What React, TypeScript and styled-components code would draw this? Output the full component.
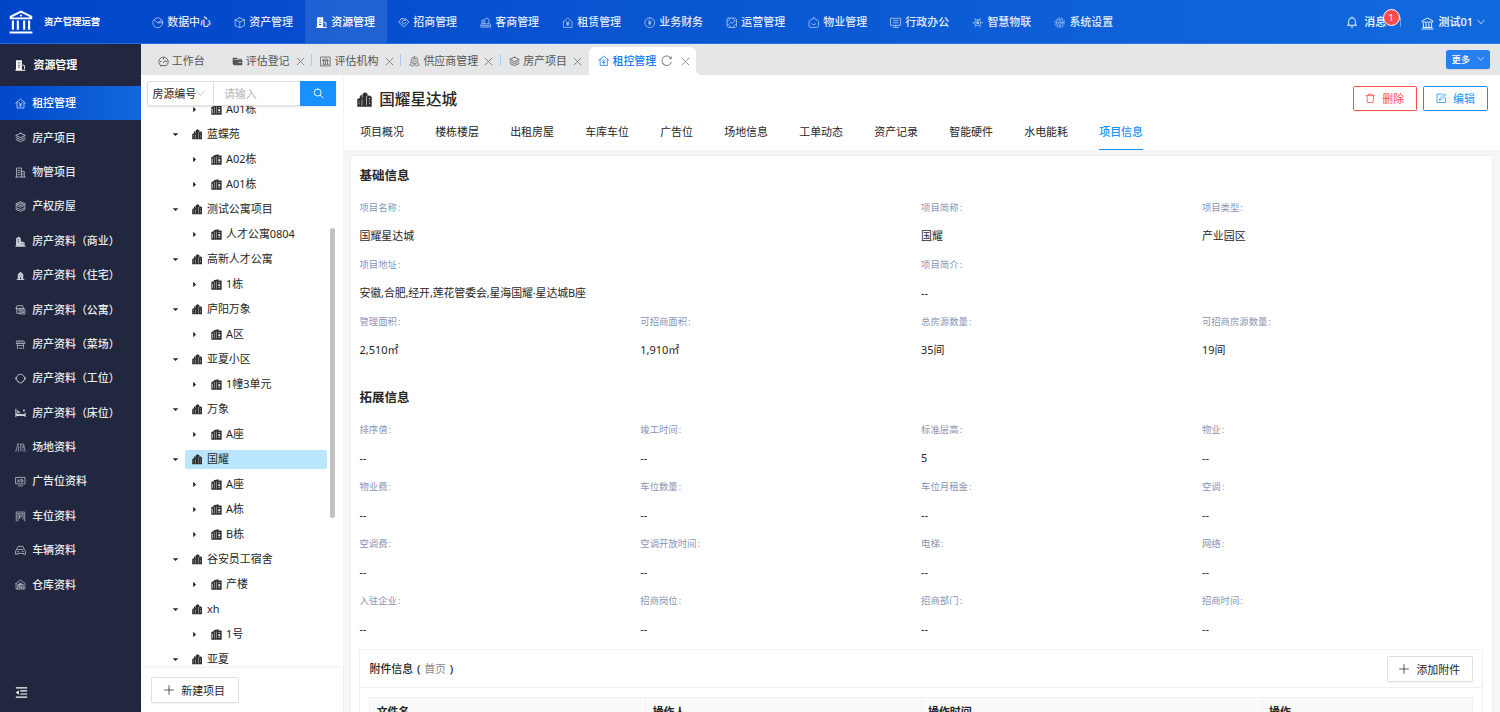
import React from "react";
import styled, { createGlobalStyle, css } from "styled-components";

const GlobalStyle = createGlobalStyle`
  *, *::before, *::after { box-sizing: border-box; }
  html, body { margin: 0; height: 100%; overflow: hidden; }
  body {
    font-family: "Noto Sans", "Noto Sans CJK SC", sans-serif;
    font-size: 10.94px;
    line-height: 1.5;
    color: #262626;
    background: #fff;
  }
  #root { height: 100%; }
`;

/* ---------- icons, drawn on a 16 x 16 grid ---------- */

const S = { fill: "none", stroke: "currentColor", strokeLinecap: "round", strokeLinejoin: "round" } as const;
const F = { fill: "currentColor", fillRule: "evenodd" } as const;

const icons: Record<string, React.ReactNode> = {
  logo: (
    <g>
      <path {...F} d="M8 .4 15.5 4v2.2H.5V4L8 .4Zm0 1.4L2.2 4.6v.4h11.6v-.4L8 1.8Z" />
      <circle {...F} cx="8" cy="3.7" r=".7" />
      <path {...F} d="M1.9 7h1.4v6.2H1.9zM5.2 7h1.4v6.2H5.2zM9.4 7h1.4v6.2H9.4zM12.7 7h1.4v6.2h-1.4zM.4 14.3h15.2v1.3H.4z" />
    </g>
  ),
  bank: <path {...S} strokeWidth="1.1" d="M1.5 5.8v-1L8 1.2l6.5 3.6v1zM3 8v5M6.3 8v5M9.7 8v5M13 8v5M1.2 14.8h13.6M2.5 12.9h11" />,
  pie: <path {...S} strokeWidth="1.1" d="M14.8 8A6.8 6.8 0 1 1 8 1.2c3.8 0 6.8 3 6.8 6.8ZM3.2 3.6 8 8l5.6-3.4M8 8h6.6" />,
  cube: <path {...S} strokeWidth="1.1" d="M8 1 14.5 4v8L8 15 1.5 12V4L8 1ZM1.5 4 8 7l6.5-3M8 7v8" />,
  office: <path {...F} d="M1.500.5h8.500v13.500h5v1.500H.5V14h1V.5Zm2.500 3.200v1.100h3.500V3.700H4Zm0 3.100v1.100h3.500V6.800H4Zm0 3.100v1.100h3.500V9.900H4ZM11 6l3.500 2.500V13h-1.200V9.200L11 7.600V6Z" />,
  officeLine: <path {...S} strokeWidth="1.1" d="M2.2 14.5V1.5h7.3v13M9.5 6.5h4v8M1 14.5h14M4.4 5h3M4.4 8h3M4.4 11h3M11.6 9.5v2" />,
  tag: <path {...S} strokeWidth="1.2" d="M4.500 2.500h6.500L15 7 8 14 1 7 4.500 2.500ZM5 7.200 8 10.200l3-3M8 4.500 5.500 7M8 4.500h2.500" />,
  stamp: <path {...S} strokeWidth="1.1" d="M6 9.200c.8-.8.8-1.600.5-2.700C5.900 4 6.900 1.500 9.300 1.500S12.800 4 12.200 6.500c-.3 1.100-.3 1.900.5 2.700M3 9.500h10c1 0 1.800.8 1.800 1.800V14H1.200v-2.700c0-1 .8-1.800 1.800-1.800ZM2.500 4.500h2.500M2 7h3M3.500 12h9" />,
  houseYen: <path {...S} strokeWidth="1" d="M2 6.500 8 1.300l6 5.200v8H2v-8ZM6 6l2 2.500L10 6M8 8.500V12M6.300 9h3.400M6.300 10.700h3.400" />,
  homeYen: <path {...S} strokeWidth="1.1" d="M1 7.500 8 1.500l7 6M3 6v8.500h10V6M6 6.800l2 2.400 2-2.400M8 9.200V12.500M6.300 10.200h3.400" />,
  yen: <path {...S} strokeWidth="1.1" d="M8 1.200a6.800 6.800 0 1 1 0 13.600A6.800 6.800 0 0 1 8 1.200ZM6.300 5 8 7.200 9.700 5M8 7.200v4M6.500 7.800h3M6.500 9.300h3" />,
  ops: <path {...S} strokeWidth="1" d="M3 1.500h10l1.500 1.500v10L13 14.500H3L1.500 13V3L3 1.500ZM1.500 6c3-.5 4-2 4.500-4.500M14.500 6c-3-.5-4-2-4.500-4.500M1.500 10c3 .5 4 2 4.500 4.500M14.500 10c-3 .5-4 2-4.500 4.500M5 9.500l2-2.500 2 2 2-3" />,
  houseSmile: <path {...S} strokeWidth="1.1" d="M8 1.300 13.600 5c.6.4.9 1 .9 1.700v5.500c0 1.300-1 2.300-2.300 2.300H3.800c-1.300 0-2.300-1-2.300-2.300V6.700c0-.7.3-1.300.9-1.700L8 1.300ZM5.300 9.500c1.500 1.600 3.900 1.600 5.400 0" />,
  monitor: <path {...S} strokeWidth="1.1" d="M1.2 1.800h13.600v9.800H1.200zM8 11.600v2.700M4.200 14.400h7.600M4.800 5h6.400M4.800 8h6.400" />,
  atom: (
    <g>
      <path {...S} strokeWidth="1" d="M8 3.800a4.200 4.200 0 1 1 0 8.400 4.200 4.200 0 0 1 0-8.400ZM4 2l1.500 2M12 2l-1.500 2M4 14l1.500-2M12 14l-1.500-2M1 8h2.500M12.500 8H15" />
      <path {...F} d="M8 6a2 2 0 1 1 0 4 2 2 0 0 1 0-4Z" />
    </g>
  ),
  gear: (
    <g {...S} strokeWidth=".8">
      <circle cx="8" cy="8" r="6.800" strokeDasharray="2.200 2" />
      <circle cx="8" cy="8" r="5" />
      <circle cx="8" cy="8" r="2" />
      <path d="M8 3.400v2.500M8 10.100v2.500M3.400 8h2.500M10.100 8h2.500" />
    </g>
  ),
  bell: <path {...S} strokeWidth="1.200" d="M3.500 12V7a4.500 4.500 0 0 1 9 0v5M2 12.300h12M6.700 14.600h2.600M8 1.200v1.200" />,
  down: <path {...S} strokeWidth="1.400" d="m2 4.500 6 7 6-7" />,
  gauge: <path {...S} strokeWidth="1.300" d="M4 14a6.800 6.800 0 1 1 8 0H4ZM8 9.500l2.500-3M8 3.500v1M3.500 8h1M11.500 8h1" />,
  folder: <path {...F} d="M1 2.500h5.500L8 4h6v2h1v7.500H2.500L1 11V2.500ZM2.500 5v.8h10V5H2.500Zm6.700 4v1.300h4V9h-4Z" />,
  boxBank: <path {...S} strokeWidth="1.100" d="M1.200 1.500h13.600v13H1.200zM4 6l4-2.500L12 6v.8H4V6ZM5 7v4.500M8 7v4.500M11 7v4.500M3.700 12h8.600" />,
  badge: <path {...S} strokeWidth=".9" d="M8 1.200a5 5 0 1 1 0 10 5 5 0 0 1 0-10ZM8 3.700a2.400 2.400 0 1 1 0 4.800 2.400 2.400 0 0 1 0-4.800ZM3.600 9 1.200 13.500l2.800-.2L5.500 15l2-3.500M12.400 9l2.400 4.500-2.800-.2L10.500 15l-2-3.500" />,
  layers: <path {...S} strokeWidth="1.200" d="M8 1.800 15 5 8 8.200 1 5l7-3.200ZM1.500 8 8 11l6.500-3M1.500 11 8 14l6.500-3" />,
  stack: <path {...S} strokeWidth="1.100" d="M8 1.200 14.500 4 8 6.800 1.500 4 8 1.200ZM1.500 4v2.200L8 9l6.500-2.800V4M1.500 7.700v2L8 12.500l6.500-2.800v-2M1.500 11v1.300L8 15l6.500-2.700V11M5 4h6" />,
  refresh: <path {...S} strokeWidth="1.400" d="M13.900 5A6.600 6.600 0 1 0 14.300 10M14.300 2.500V5.200h-2.500" />,
  close: <path {...S} strokeWidth="1.600" d="m2 2 12 12M14 2 2 14" />,
  city: <path {...F} d="M.3 7.500 3 6.300V4.300L5.200 3v3h.6V2L8.500.3l2.800 1.600V5l1.200-1.500L15.700 5v10.600H.3V7.500Zm1.500 2v1h.8v-1h-.8Zm0 2.500v1h.8v-1h-.8ZM5 8v6.300h.6V8H5Zm5-3.500v9.800h.6V4.500H10Zm2.700 2v.9h1v-.9h-1Zm0 2.500v.9h1V9h-1Zm0 2.500v.9h1v-.9h-1Z" />,
  tower: <path {...F} d="M.5 4.500 4 3.200V1.800L11 .3v1.900h4.500v13.300H.5v-11ZM1.700 7v6.500h.8V7h-.8Zm2.800-2.500v9.300h.6V4.500h-.6ZM8 3.500v10.300h.6V3.500H8Zm2.500 1.200v.8h3v-.8h-3Zm.2 2.800v3h2.600v-3h-2.600Zm-.2 4.500v.8h3V12h-3Z" />,
  trash: <path {...S} strokeWidth="1.200" d="M1.500 4h13M5 4V1.700h6V4M3 4l.6 10.500h8.800L13 4" />,
  edit: <path {...S} strokeWidth="1.200" d="M14.300 7.500v7H1.500V1.700H9M5.500 10.500l.3-2L13 1.300l1.800 1.800-7.200 7.200-2.100.2Z" />,
  search: <path {...S} strokeWidth="1.400" d="M6.800 1.500a5.100 5.100 0 1 1 0 10.200 5.100 5.100 0 0 1 0-10.200ZM10.600 10.500l4 4" />,
  plus: <path {...S} strokeWidth="1.200" d="M8 1v14M1 8h14" />,
  caretDown: <path {...F} d="M1.500 5h13L8 11.500z" />,
  caretRight: <path {...F} d="M5 1.500v13L11.500 8z" />,
  shop: <path {...F} d="M1.500 3.500 5.500.8l3 2.700V7.500l5.500 1.800V14H15.500v1.500H.5V14h1V3.500ZM3.800 5v1.100h2V5h-2Zm0 3v1.100h2V8h-2ZM9 11v1.100h1.100V11H9Zm2.500 0v1.100h1.100V11h-1.100Z" />,
  villa: <path {...F} d="M4 6 8 2.500 12 6v7.200h1.500v1.300h-11v-1.300H4V6Zm2 1.500v1h1v-1H6Zm3 0v1h1v-1H9Zm-1.700 3v2.700h1.400v-2.700H7.300Z" />,
  flat: <path {...S} strokeWidth="1.100" d="M1.500 6.500 3 2.500h8l1.500 4M2.500 6.500v7H7M1.500 6.500h12M7 8.500h7.500v6H7v-6ZM4.500 9h1M9 10.500h3.500M9 12.500h3.500" />,
  market: <path {...S} strokeWidth="1" d="M3 3h10l1.500 3.500h-13L3 3ZM3.500 6.500v7.500M12.500 6.500v7.500M3.500 9.500h9M6 3v3.500M10 3v3.500M6 13.500h4" />,
  seat: <path {...S} strokeWidth="1.200" d="M4.500 12.800A6 6 0 1 1 11.500 12.800M4.200 11.500l1.800 2.800h4l1.800-2.800M1.200 6.500v3M14.800 6.500v3" />,
  bed: <path {...F} d="M.5 2.500H2V9l3.500 1.200h8.500V8.500h1.500V14.500H14v-1.300H2v1.300H.5v-12ZM3 4.500 6 6.500 8.500 9.200 3 8V4.500Zm10-1a1.500 1.500 0 1 1 0 3 1.500 1.500 0 0 1 0-3Z" />,
  site: <path {...S} strokeWidth=".9" d="M4 3 1.200 13.500M14.800 13.500 12.500 3H9M4 3h2M5.500 6 4.500 13.500M8 3v2M8 7v2M8 11v2M10 6h2.500M10 8.500h3M10 11l3 2.500" />,
  ad: <path {...S} strokeWidth="1.100" d="M1.500 2h13v9.500h-13zM5 14.500h6M4 8.800l1.300-3.500 1.300 3.500M9 5.300v3.500h1.200c2 0 2-3.500 0-3.500H9Z" />,
  parking: <path {...S} strokeWidth="1" d="M1.800 14.500v-13h12.400v13M4.300 4v10.500M4.300 4h7.400M11.700 4v8M6.500 11V6h1.800c2 0 2 2.800 0 2.800H6.500" />,
  car: <path {...S} strokeWidth="1.100" d="M2.200 7 4.500 2h7l2.300 5c.8.5 1.400 1 1.400 2v4.500h-2.700v-1.300h-9v1.300H.8V9c0-1 .6-1.500 1.400-2ZM4.500 6.500h7M4 9.500h1.500M10.500 9.500H12" />,
  store: <path {...S} strokeWidth="1" d="M1.500 6.500 8 1.500l6.500 5v8h-13v-8ZM4 14.500V8h8v6.500M6 8V6.500h4V8M6 10h4v3H6v-3ZM6 10l4 3" />,
  collapse: <path {...F} d="M1 1.500h14v1.500H1zM6.500 5.300H15v1.500H6.500zM6.500 9.100H15v1.500H6.500zM1 12.900h14v1.500H1zM1 8l3.700-2.900v5.800z" />,
};

const Svg = styled.svg<{ $size: number }>`
  display: block;
  flex: none;
  width: ${(p) => p.$size}px;
  height: ${(p) => p.$size}px;
`;

const Icon = ({ name, size = 11 }: { name: string; size?: number }) => (
  <Svg $size={size} viewBox="0 0 16 16" aria-hidden>
    {icons[name]}
  </Svg>
);

/* ---------- shell ---------- */

const Shell = styled.div`
  display: flex;
  flex-direction: column;
  height: 712px;
  width: 1500px;
  overflow: hidden;
`;

const Header = styled.header`
  display: flex;
  height: 44px;
  flex: none;
  color: #fff;
  background: linear-gradient(90deg, #0045c8 0%, #0752d0 35%, #1269dd 100%);
  border-bottom: 1px solid rgba(80, 150, 240, 0.45);
`;

const Brand = styled.div`
  display: flex;
  align-items: center;
  width: 140.6px;
  padding: 1px 0 0 9px;
  gap: 11px;
  font-size: 9.375px;
  font-weight: 700;
  white-space: nowrap;
`;

const Nav = styled.nav`
  display: flex;
  flex: 1;
`;

const NavItem = styled.a<{ $active?: boolean }>`
  display: flex;
  align-items: center;
  justify-content: center;
  gap: 3.5px;
  width: 82.03px;
  height: 43px;
  padding-top: 1.500px;
  font-weight: 500;
  color: ${(p) => (p.$active ? "#fff" : "rgba(255,255,255,.9)")};
  background: ${(p) => (p.$active ? "rgba(255,255,255,.11)" : "none")};
  white-space: nowrap;
  & > svg { opacity: ${(p) => (p.$active ? 1 : 0.8)}; }
`;

const Account = styled.div`
  display: flex;
  align-items: center;
  padding: 1.500px 15.500px 0 0;
  font-weight: 500;
  white-space: nowrap;
`;

const Messages = styled.div`
  position: relative;
  display: flex;
  align-items: center;
  gap: 6px;
  padding-right: 15px;
  margin-right: 19.500px;
  &::after {
    content: "";
    width: 1px;
    height: 10px;
    background: rgba(255, 255, 255, 0.4);
    position: absolute;
    right: 0;
    top: 3px;
  }
`;

const Badge = styled.span`
  position: absolute;
  right: 1.500px;
  top: -5px;
  width: 17px;
  height: 17px;
  border-radius: 50%;
  border: 1px solid #fff;
  background: #ff4d4f;
  font-size: 9px;
  line-height: 15px;
  font-weight: 400;
  text-align: center;
`;

const User = styled.div`
  display: flex;
  align-items: center;
  gap: 5px;
  & > svg:first-child { margin-top: 3px; }
  & > svg:last-child { margin-left: -1.500px; }
`;

const Body = styled.div`
  display: flex;
  flex: 1;
  min-height: 0;
`;

const Sidebar = styled.aside`
  display: flex;
  flex-direction: column;
  width: 140.6px;
  flex: none;
  background: #20273f;
  color: #fff;
`;

const SideTitle = styled.div`
  display: flex;
  align-items: center;
  gap: 8px;
  height: 42px;
  padding-left: 14.5px;
  font-weight: 700;
`;

const SideItem = styled.a<{ $active?: boolean }>`
  display: flex;
  align-items: center;
  gap: 6.700px;
  height: 34.375px;
  flex: none;
  padding: 0.700px 0 0 14.5px;
  font-weight: 500;
  white-space: nowrap;
  color: ${(p) => (p.$active ? "#fff" : "#e9eaee")};
  background: ${(p) => (p.$active ? "linear-gradient(90deg, #0047c9, #1268dc)" : "none")};
  & > svg { opacity: 0.85; }
`;

const SideFooter = styled.div`
  display: flex;
  align-items: center;
  margin-top: auto;
  height: 39px;
  padding: 0 0 2px 14.5px;
  border-top: 1px solid #1b2a37;
`;

const Main = styled.div`
  display: flex;
  flex-direction: column;
  flex: 1;
  min-width: 0;
`;

/* ---------- page tabs ---------- */

const TabStrip = styled.div`
  display: flex;
  align-items: flex-end;
  height: 31px;
  flex: none;
  padding-left: 8px;
  background: #e5e6e8;
  color: #555;
`;

const PageTab = styled.div<{ $first?: boolean; $active?: boolean }>`
  position: relative;
  display: flex;
  align-items: center;
  height: 28px;
  padding: 0 6.700px 0 9px;
  white-space: nowrap;
  ${(p) => p.$first && css`padding-right: 18px;`}
  & + &::before {
    content: "";
    position: absolute;
    left: 0;
    top: 7px;
    width: 1px;
    height: 12px;
    background: #a9c9f5;
  }
  ${(p) =>
    p.$active &&
    css`
      background: #fff;
      border-radius: 6px 6px 0 0;
      color: #1677ff;
      font-weight: 500;
      &&::before {
        left: -6px;
        top: auto;
        bottom: 0;
        width: 6px;
        height: 6px;
        background: radial-gradient(circle at 0 0, transparent 6px, #fff 6.500px);
      }
      &::after {
        content: "";
        position: absolute;
        right: -6px;
        bottom: 0;
        width: 6px;
        height: 6px;
        background: radial-gradient(circle at 100% 0, transparent 6px, #fff 6.500px);
      }
    `}
`;

const TabLabel = styled.span`
  margin-left: 3.200px;
`;

const TabAction = styled.span`
  display: flex;
  margin-left: 6.200px;
  color: #7b7b7b;
`;

const ActiveActions = styled.span`
  display: flex;
  align-items: center;
  gap: 7.800px;
  margin-left: 5px;
  color: #8a8a8a;
`;

const MoreButton = styled.button`
  display: flex;
  align-items: center;
  justify-content: center;
  gap: 7px;
  width: 44px;
  height: 19px;
  margin: 0 10px 6.300px auto;
  padding: 0;
  border: 0;
  border-radius: 2.500px;
  background: #2580f2;
  color: #fff;
  font: 500 9.375px "Noto Sans", "Noto Sans CJK SC", sans-serif;
  box-shadow: 0 1px 1px rgba(0, 0, 0, 0.08);
`;

const Workspace = styled.div`
  display: flex;
  flex: 1;
  min-height: 0;
`;

/* ---------- project tree ---------- */

const TreePane = styled.section`
  display: flex;
  flex-direction: column;
  width: 203.600px;
  flex: none;
  border-right: 1px solid #f3f3f3;
`;

const SearchBar = styled.div`
  display: flex;
  height: 25px;
  margin: 6px 7px 0 6.800px;
  flex: none;
  box-shadow: 0 1px 2px rgba(0, 0, 0, 0.12);
`;

const FieldSelect = styled.div`
  display: flex;
  align-items: center;
  width: 67px;
  padding: 0.500px 0 0 4px;
  border: 1px solid #dfdfdf;
  border-radius: 2px 0 0 2px;
  white-space: nowrap;
  & > svg { color: #bfbfbf; }
`;

const SearchInput = styled.div`
  display: flex;
  align-items: center;
  flex: 1;
  padding: 0.500px 0 0 9.500px;
  border: 1px solid #dfdfdf;
  border-width: 1px 0;
  color: #b5b5b5;
`;

const SearchButton = styled.button`
  display: flex;
  align-items: center;
  justify-content: center;
  width: 35.800px;
  padding: 0;
  border: 0;
  background: #1890ff;
  color: #fff;
`;

const TreeScroll = styled.div`
  display: flex;
  flex: 1;
  min-height: 0;
  overflow: hidden;
`;

const TreeList = styled.div`
  display: flex;
  flex-direction: column;
  justify-content: flex-start;
  width: 186px;
  margin-top: -9px;
`;

const TreeRow = styled.div<{ $level: 1 | 2 }>`
  display: flex;
  align-items: center;
  height: 25.010px;
  flex: none;
  padding-left: ${(p) => (p.$level === 1 ? 31.400 : 50.200)}px;
`;

const TreeLabel = styled.span<{ $selected?: boolean; $level: 1 | 2 }>`
  display: flex;
  align-items: center;
  flex: 1;
  gap: 5px;
  height: 19px;
  margin-left: ${(p) => (p.$level === 1 ? 6 : 6.300)}px;
  padding-left: 7px;
  border-radius: 1.500px;
  background: ${(p) => (p.$selected ? "#bae7ff" : "none")};
  white-space: nowrap;
  & > svg { color: #303030; }
  & > span { margin-left: ${(p) => (p.$level === 1 ? -0.5 : -1)}px; }
`;

const ScrollThumb = styled.div`
  width: 5px;
  height: 290px;
  margin: 122px 0 0 3px;
  border-radius: 3px;
  background: #c1c1c1;
`;

const TreeFooter = styled.div`
  display: flex;
  align-items: center;
  height: 44px;
  flex: none;
  padding-left: 10px;
  background: #fff;
  box-shadow: 0 -1px 3px rgba(0, 0, 0, 0.08);
`;

const Button = styled.button<{ $tone?: string; $width: number }>`
  display: flex;
  align-items: center;
  justify-content: center;
  gap: 7px;
  width: ${(p) => p.$width}px;
  height: 25.500px;
  padding: 0;
  border: 1px solid ${(p) => p.$tone || "#dedede"};
  border-radius: 1.500px;
  background: #fff;
  color: ${(p) => p.$tone || "#262626"};
  font: 400 10.94px "Noto Sans", "Noto Sans CJK SC", sans-serif;
  white-space: nowrap;
  box-shadow: 0 1px 1px rgba(0, 0, 0, 0.03);
`;

/* ---------- detail ---------- */

const Detail = styled.section`
  display: flex;
  flex-direction: column;
  flex: 1;
  min-width: 0;
  background: #f6f6f6;
`;

const DetailHead = styled.div`
  display: flex;
  flex-direction: column;
  height: 74.500px;
  flex: none;
  background: #fff;
`;

const TitleRow = styled.div`
  display: flex;
  align-items: center;
  height: 46.500px;
  padding: 0 12.500px 0 13px;
  & > svg { color: #303030; margin-top: 2px; }
`;

const Title = styled.h1`
  flex: 1;
  margin: 1px 0 0 7px;
  font-size: 15.625px;
  font-weight: 500;
  line-height: 24px;
`;

const TitleActions = styled.div`
  display: flex;
  gap: 6.500px;
`;

const SubTabs = styled.div`
  display: flex;
  gap: 31.250px;
  padding-left: 16px;
  height: 28px;
`;

const SubTab = styled.a<{ $active?: boolean }>`
  display: flex;
  justify-content: center;
  height: 28px;
  padding-top: 2.500px;
  white-space: nowrap;
  font-weight: ${(p) => (p.$active ? 500 : 400)};
  color: ${(p) => (p.$active ? "#1890ff" : "#262626")};
  border-bottom: 1.500px solid ${(p) => (p.$active ? "#1890ff" : "transparent")};
`;

const Card = styled.div`
  display: flex;
  flex-direction: column;
  flex: 1;
  min-height: 0;
  overflow: hidden;
  margin: 5.500px 7.400px 0 5.400px;
  padding: 0 8.900px;
  border: 1px solid #f0f0f0;
  border-bottom: 0;
  background: #fff;
`;

const SectionTitle = styled.h2`
  display: flex;
  align-items: center;
  height: 37px;
  flex: none;
  margin: 0;
  padding-top: 3px;
  font-size: 12.500px;
  font-weight: 700;
`;

const Fields = styled.div`
  display: grid;
  grid-template-columns: repeat(4, 1fr);
  flex: none;
  margin-bottom: 14px;
`;

const Field = styled.div<{ $span?: number }>`
  grid-column: span ${(p) => p.$span || 1};
  height: 57.030px;
`;

const FieldLabel = styled.div`
  height: 29px;
  line-height: 30px;
  font-size: 9.375px;
  color: #8a94b3;
  & > i { margin-left: 1px; font-style: normal; }
`;

const FieldValue = styled.div<{ $long?: boolean }>`
  line-height: 27.500px;
  color: #1f1f1f;
  letter-spacing: ${(p) => (p.$long ? "-0.130px" : "0")};
`;

const Attachments = styled.div`
  flex: none;
  margin-top: -8px;
  border: 1px solid #f0f0f0;
`;

const AttachHead = styled.div`
  display: flex;
  align-items: center;
  justify-content: space-between;
  height: 38.300px;
  padding: 0 8.700px 0 9px;
  border-bottom: 1px solid #f0f0f0;
`;

const AttachTitle = styled.div`
  font-weight: 500;
  word-spacing: 0.900px;
  & > span { color: #8c8c8c; font-weight: 400; }
`;

const Table = styled.div`
  display: grid;
  grid-template-columns: 275px 275.300px 341px 1fr;
  margin: 8.500px 9px 20px;
  border: 1px solid #f0f0f0;
  background: #fafafa;
`;

const Th = styled.div`
  padding: 6.500px 6.200px;
  font-weight: 700;
  & + & { border-left: 1px solid #f0f0f0; }
`;

/* ---------- data ---------- */

const navItems = [
  ["pie", "数据中心"], ["cube", "资产管理"], ["office", "资源管理"], ["tag", "招商管理"],
  ["stamp", "客商管理"], ["houseYen", "租赁管理"], ["yen", "业务财务"], ["ops", "运营管理"],
  ["houseSmile", "物业管理"], ["monitor", "行政办公"], ["atom", "智慧物联"], ["gear", "系统设置"],
];

const sideItems = [
  ["homeYen", "租控管理"], ["layers", "房产项目"], ["officeLine", "物管项目"], ["stack", "产权房屋"],
  ["shop", "房产资料（商业）"], ["villa", "房产资料（住宅）"], ["flat", "房产资料（公寓）"],
  ["market", "房产资料（菜场）"], ["seat", "房产资料（工位）"], ["bed", "房产资料（床位）"],
  ["site", "场地资料"], ["ad", "广告位资料"], ["parking", "车位资料"], ["car", "车辆资料"], ["store", "仓库资料"],
];

const pageTabs = [
  ["folder", "评估登记"], ["boxBank", "评估机构"], ["badge", "供应商管理"], ["layers", "房产项目"],
];

const tree: [1 | 2, string][] = [
  [2, "A01栋"], [1, "蓝蝶苑"], [2, "A02栋"], [2, "A01栋"], [1, "测试公寓项目"], [2, "人才公寓0804"],
  [1, "高新人才公寓"], [2, "1栋"], [1, "庐阳万象"], [2, "A区"], [1, "亚夏小区"], [2, "1幢3单元"],
  [1, "万象"], [2, "A座"], [1, "国耀"], [2, "A座"], [2, "A栋"], [2, "B栋"], [1, "谷安员工宿舍"],
  [2, "产楼"], [1, "xh"], [2, "1号"], [1, "亚夏"],
];

const subTabs = [
  "项目概况", "楼栋楼层", "出租房屋", "车库车位", "广告位", "场地信息",
  "工单动态", "资产记录", "智能硬件", "水电能耗", "项目信息",
];

type FieldData = [string, string, number?];

const basicFields: FieldData[] = [
  ["项目名称", "国耀星达城", 2], ["项目简称", "国耀"], ["项目类型", "产业园区"],
  ["项目地址", "安徽,合肥,经开,莲花管委会,星海国耀·星达城B座", 2], ["项目简介", "--", 2],
  ["管理面积", "2,510㎡"], ["可招商面积", "1,910㎡"], ["总房源数量", "35间"], ["可招商房源数量", "19间"],
];

const extraFields: FieldData[] = [
  ["排序值", "--"], ["竣工时间", "--"], ["标准层高", "5"], ["物业", "--"],
  ["物业费", "--"], ["车位数量", "--"], ["车位月租金", "--"], ["空调", "--"],
  ["空调费", "--"], ["空调开放时间", "--"], ["电梯", "--"], ["网络", "--"],
  ["入驻企业", "--"], ["招商岗位", "--"], ["招商部门", "--"], ["招商时间", "--"],
];

const FieldGrid = ({ data }: { data: FieldData[] }) => (
  <Fields>
    {data.map(([label, value, span]) => (
      <Field key={label} $span={span}>
        <FieldLabel>
          {label}
          <i>:</i>
        </FieldLabel>
        <FieldValue $long={value.length > 20}>{value}</FieldValue>
      </Field>
    ))}
  </Fields>
);

export default function App() {
  return (
    <Shell>
      <GlobalStyle />
      <Header>
        <Brand>
          <Icon name="logo" size={24} />
          资产管理运营
        </Brand>
        <Nav>
          {navItems.map(([icon, label]) => (
            <NavItem key={label} $active={label === "资源管理"}>
              <Icon name={icon} size={11.5} />
              {label}
            </NavItem>
          ))}
        </Nav>
        <Account>
          <Messages>
            <Icon name="bell" size={12} />
            消息
            <Badge>1</Badge>
          </Messages>
          <User>
            <Icon name="bank" size={13} />
            测试01
            <Icon name="down" size={8} />
          </User>
        </Account>
      </Header>
      <Body>
        <Sidebar>
          <SideTitle>
            <Icon name="office" />
            资源管理
          </SideTitle>
          {sideItems.map(([icon, label], i) => (
            <SideItem key={label} $active={i === 0}>
              <Icon name={icon} />
              {label}
            </SideItem>
          ))}
          <SideFooter>
            <Icon name="collapse" size={13} />
          </SideFooter>
        </Sidebar>
        <Main>
          <TabStrip>
            <PageTab $first>
              <Icon name="gauge" />
              <TabLabel>工作台</TabLabel>
            </PageTab>
            {pageTabs.map(([icon, label]) => (
              <PageTab key={label}>
                <Icon name={icon} size={11} />
                <TabLabel>{label}</TabLabel>
                <TabAction>
                  <Icon name="close" size={9} />
                </TabAction>
              </PageTab>
            ))}
            <PageTab $active>
              <Icon name="homeYen" size={11.5} />
              <TabLabel>租控管理</TabLabel>
              <ActiveActions>
                <Icon name="refresh" size={11.5} />
                <Icon name="close" size={9} />
              </ActiveActions>
            </PageTab>
            <MoreButton>
              更多
              <Icon name="down" size={7.5} />
            </MoreButton>
          </TabStrip>
          <Workspace>
            <TreePane>
              <SearchBar>
                <FieldSelect>
                  房源编号
                  <Icon name="down" size={9} />
                </FieldSelect>
                <SearchInput>请输入</SearchInput>
                <SearchButton>
                  <Icon name="search" size={11} />
                </SearchButton>
              </SearchBar>
              <TreeScroll>
                <TreeList>
                  {tree.map(([level, label], i) => (
                    <TreeRow key={i} $level={level}>
                      <Icon name={level === 1 ? "caretDown" : "caretRight"} size={7} />
                      <TreeLabel $level={level} $selected={label === "国耀"}>
                        <Icon name={level === 1 ? "city" : "tower"} size={level === 1 ? 10.5 : 11} />
                        <span>{label}</span>
                      </TreeLabel>
                    </TreeRow>
                  ))}
                </TreeList>
                <ScrollThumb />
              </TreeScroll>
              <TreeFooter>
                <Button $width={88}>
                  <Icon name="plus" size={10} />
                  新建项目
                </Button>
              </TreeFooter>
            </TreePane>
            <Detail>
              <DetailHead>
                <TitleRow>
                  <Icon name="city" size={15} />
                  <Title>国耀星达城</Title>
                  <TitleActions>
                    <Button $width={64} $tone="#ff4d4f">
                      <Icon name="trash" size={10.5} />
                      删除
                    </Button>
                    <Button $width={64.5} $tone="#1890ff">
                      <Icon name="edit" size={10.5} />
                      编辑
                    </Button>
                  </TitleActions>
                </TitleRow>
                <SubTabs>
                  {subTabs.map((label) => (
                    <SubTab key={label} $active={label === "项目信息"}>
                      {label}
                    </SubTab>
                  ))}
                </SubTabs>
              </DetailHead>
              <Card>
                <SectionTitle>基础信息</SectionTitle>
                <FieldGrid data={basicFields} />
                <SectionTitle>拓展信息</SectionTitle>
                <FieldGrid data={extraFields} />
                <Attachments>
                  <AttachHead>
                    <AttachTitle>
                      附件信息 ( <span>首页</span> )
                    </AttachTitle>
                    <Button $width={86.5}>
                      <Icon name="plus" size={10} />
                      添加附件
                    </Button>
                  </AttachHead>
                  <Table>
                    <Th>文件名</Th>
                    <Th>操作人</Th>
                    <Th>操作时间</Th>
                    <Th>操作</Th>
                  </Table>
                </Attachments>
              </Card>
            </Detail>
          </Workspace>
        </Main>
      </Body>
    </Shell>
  );
}
